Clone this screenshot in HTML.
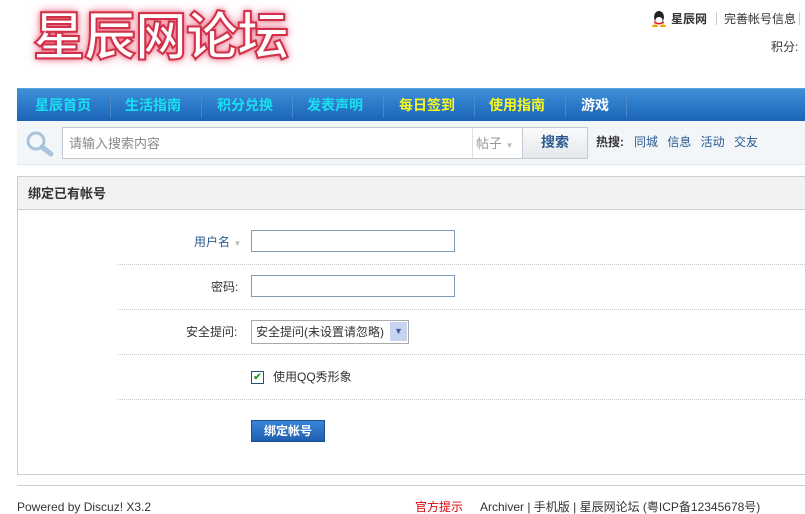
<!DOCTYPE html>
<html><head><meta charset="utf-8"><style>
*{margin:0;padding:0;box-sizing:border-box}
body{width:805px;height:503px;overflow:hidden;background:#fff;font:12px/14px "Liberation Sans","Noto Sans CJK SC",sans-serif;color:#333;position:relative}
.a{position:absolute}
.logo{left:33px;top:0px;font:bold 52px/66px "Noto Sans CJK SC",sans-serif;color:#fff;letter-spacing:-1px;-webkit-text-stroke:2px #d03048;text-shadow:0 0 4px #e8506a,0 0 8px #f08aa0,0 0 12px #f5b0c0}
.nav{left:17px;top:88px;width:788px;height:33px;background:linear-gradient(#3f8fd8,#1a64b8);border-top:1px solid #5aa0e0}
.nav span{position:absolute;top:8px;font:bold 14px/16px "Noto Sans CJK SC",sans-serif}
.sep{position:absolute;top:4px;width:1px;height:24px;background:#4d88c8}
.sb{left:17px;top:121px;width:788px;height:44px;background:#f3f6f9;border-bottom:1px solid #e2e6ea}
.box{left:17px;top:176px;width:800px;height:299px;border:1px solid #cdcdcd}
.hd{height:33px;background:#f2f2f2;border-bottom:1px solid #cdcdcd;font:bold 13px/15px "Noto Sans CJK SC",sans-serif;padding:8px 10px;color:#333}
.dl{left:118px;width:687px;border-top:1px dotted #c8c8c8;height:0}
.inp{left:251px;width:204px;height:22px;border:1px solid #7f9db9;background:#fff}
.lb{font-size:12px;color:#333}
</style></head><body>
<div class="a logo">星辰网论坛</div>
<div class="a" style="left:652px;top:11px;width:14px;height:15px;"><svg width="14" height="16"><ellipse cx="7" cy="6" rx="5" ry="6" fill="#222"/><ellipse cx="7" cy="9" rx="3.5" ry="3" fill="#fff"/><path d="M2 10 Q7 14 12 10 L12 12 Q7 15 2 12Z" fill="#e02020"/><ellipse cx="3" cy="15" rx="3" ry="1.5" fill="#f0a000"/><ellipse cx="11" cy="15" rx="3" ry="1.5" fill="#f0a000"/></svg></div>
<div class="a" style="left:671px;top:12px;font-weight:bold;color:#333">星辰网</div>
<div class="a" style="left:716px;top:12px;width:1px;height:13px;background:#ccc"></div>
<div class="a" style="left:724px;top:12px;color:#333">完善帐号信息</div>
<div class="a" style="left:799px;top:12px;width:1px;height:13px;background:#ccc"></div>
<div class="a" style="left:771px;top:40px;color:#333">积分:</div>
<div class="a nav">
<span style="left:18px;color:#19e0f0">星辰首页</span><div class="sep" style="left:93px"></div>
<span style="left:108px;color:#19e0f0">生活指南</span><div class="sep" style="left:184px"></div>
<span style="left:200px;color:#19e0f0">积分兑换</span><div class="sep" style="left:275px"></div>
<span style="left:290px;color:#19e0f0">发表声明</span><div class="sep" style="left:366px"></div>
<span style="left:382px;color:#f8f820">每日签到</span><div class="sep" style="left:457px"></div>
<span style="left:472px;color:#f8f820">使用指南</span><div class="sep" style="left:548px"></div>
<span style="left:564px;color:#fff">游戏</span><div class="sep" style="left:609px"></div>
</div>
<div class="a sb"></div>
<svg class="a" style="left:24px;top:129px" width="32" height="28"><circle cx="12" cy="12" r="8" fill="none" stroke="#a8c4dc" stroke-width="3"/><path d="M18 18 L27 25" stroke="#a8c4dc" stroke-width="5" stroke-linecap="round"/></svg>
<div class="a" style="left:62px;top:127px;width:501px;height:32px;border:1px solid #c3c9d0;background:#fff"></div>
<div class="a" style="left:69px;top:136px;color:#888;font-size:13px;line-height:15px">请输入搜索内容</div>
<div class="a" style="left:472px;top:128px;width:1px;height:30px;background:#e0e0e0"></div>
<div class="a" style="left:476px;top:136px;color:#999;font-size:13px;line-height:15px">帖子 <span style="font-size:8px;color:#bbb">▼</span></div>
<div class="a" style="left:522px;top:127px;width:66px;height:32px;border:1px solid #c3c9d0;background:linear-gradient(#fafbfc,#e4e8ec);color:#2a5a90;font:bold 14px/29px 'Noto Sans CJK SC',sans-serif;text-align:center">搜索</div>
<div class="a" style="left:596px;top:135px;font-weight:bold;color:#333">热搜:</div>
<div class="a" style="left:634px;top:135px;color:#2a5a90;word-spacing:6px">同城 信息 活动 交友</div>
<div class="a box"><div class="hd">绑定已有帐号</div></div>
<div class="a" style="left:194px;top:235px;color:#2a5a90">用户名 <span style="font-size:8px;color:#bbb">▼</span></div>
<div class="a inp" style="top:230px"></div>
<div class="a dl" style="top:264px"></div>
<div class="a lb" style="left:211px;top:280px">密码:</div>
<div class="a inp" style="top:275px"></div>
<div class="a dl" style="top:309px"></div>
<div class="a lb" style="left:186px;top:325px">安全提问:</div>
<div class="a" style="left:251px;top:320px;width:158px;height:24px;border:1px solid #aaa;background:#fff;padding:4px 4px">安全提问(未设置请忽略)</div>
<div class="a" style="left:390px;top:322px;width:17px;height:19px;background:#c6d4f0;color:#4060a0;font-size:9px;text-align:center;line-height:19px">▼</div>
<div class="a dl" style="top:354px"></div>
<div class="a" style="left:251px;top:371px;width:13px;height:13px;border:1px solid #1c5180;background:#fff;color:#21a121;font-size:10px;line-height:11px;text-align:center;font-weight:bold">✔</div>
<div class="a lb" style="left:273px;top:370px">使用QQ秀形象</div>
<div class="a dl" style="top:399px"></div>
<div class="a" style="left:251px;top:420px;width:74px;height:22px;background:linear-gradient(#3a86d8,#1f5eb0);border:1px solid #1a4f8f;color:#fff;font-weight:bold;text-align:center;line-height:20px">绑定帐号</div>
<div class="a" style="left:17px;top:485px;width:788px;height:1px;background:#cdcdcd"></div>
<div class="a" style="left:17px;top:500px;color:#333">Powered by Discuz! X3.2</div>
<div class="a" style="left:415px;top:500px;color:#d00">官方提示</div>
<div class="a" style="left:480px;top:500px;color:#333">Archiver | 手机版 | 星辰网论坛 (粤ICP备12345678号)</div>
</body></html>
